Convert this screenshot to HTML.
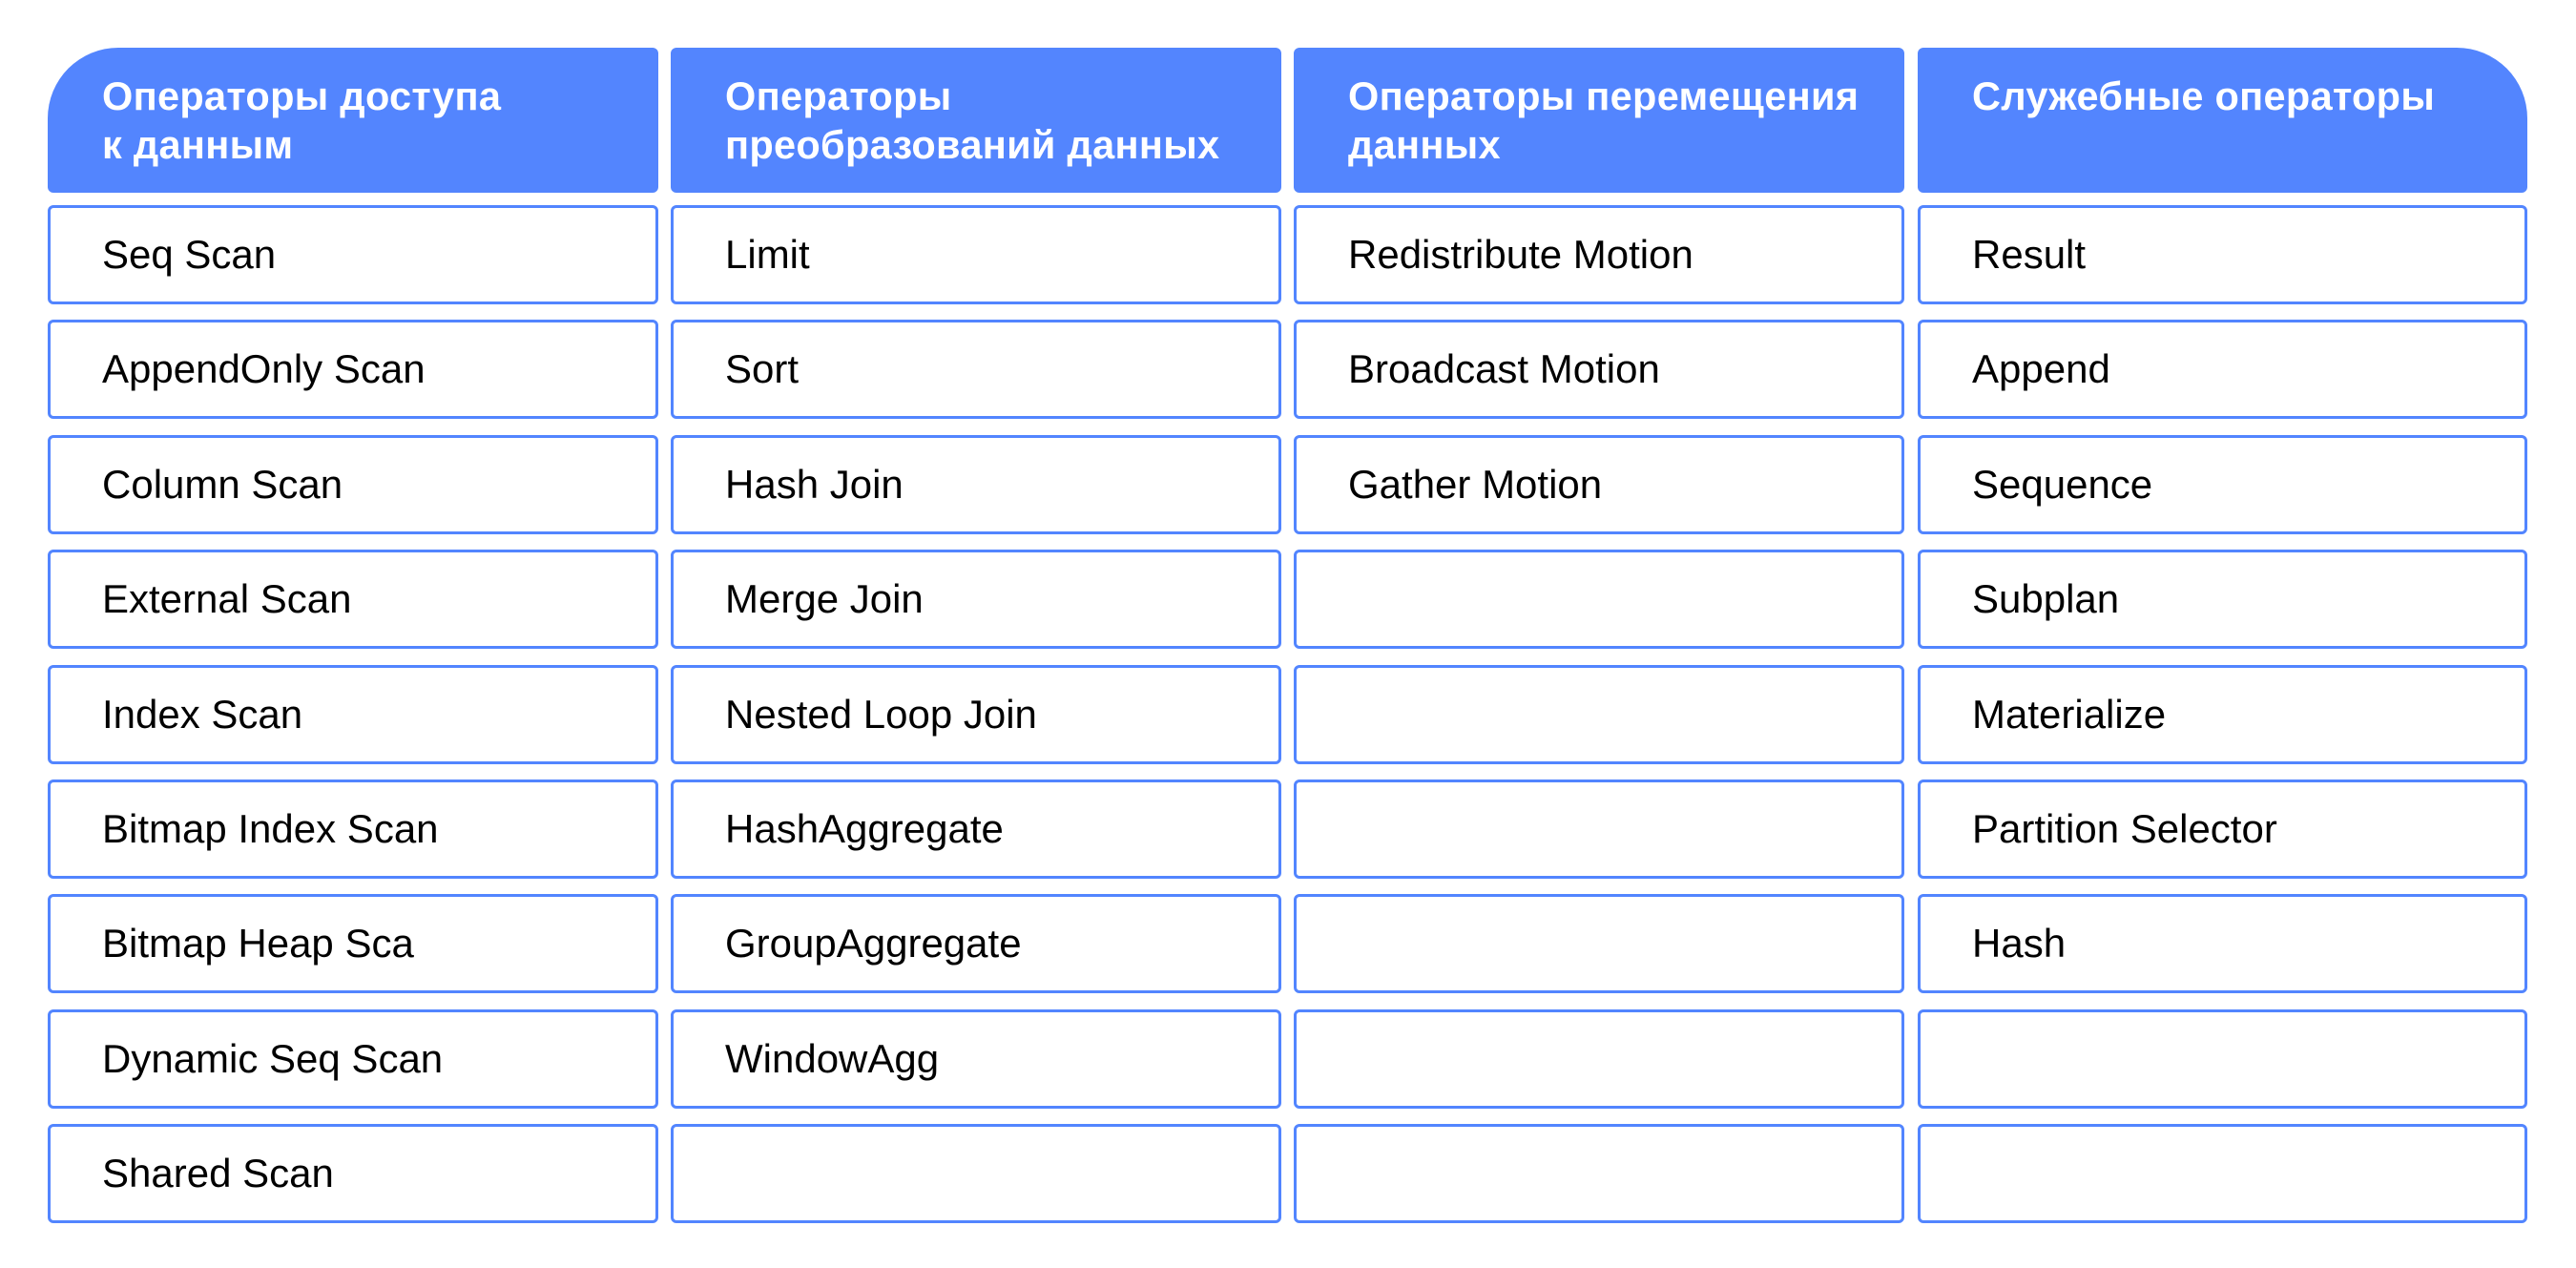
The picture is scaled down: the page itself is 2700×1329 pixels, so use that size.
<!DOCTYPE html>
<html><head><meta charset="utf-8"><style>
body{margin:0;width:2700px;height:1329px;background:#fff;position:relative;font-family:"Liberation Sans",sans-serif;overflow:hidden}
.h{position:absolute;top:50px;height:152px;background:#5385fe;border-radius:6px;color:#fff;font-weight:bold;font-size:41.5px;line-height:51px;box-sizing:border-box;padding:25px 0 0 57px;letter-spacing:0.3px}
.c{position:absolute;height:104px;border:3px solid #5285ff;border-radius:6px;box-sizing:border-box;font-size:42px;line-height:98px;padding-left:54px;color:#000}
</style></head><body>
<div class="h" style="left:50px;width:640px;border-top-left-radius:74px">Операторы доступа<br>к данным</div>
<div class="h" style="left:703px;width:640px">Операторы<br>преобразований данных</div>
<div class="h" style="left:1356px;width:640px">Операторы перемещения<br>данных</div>
<div class="h" style="left:2010px;width:639px;border-top-right-radius:74px">Служебные операторы</div>
<script>
const cols=[50,703,1356,2010];
const data=[
["Seq Scan","AppendOnly Scan","Column Scan","External Scan","Index Scan","Bitmap Index Scan","Bitmap Heap Sca","Dynamic Seq Scan","Shared Scan"],
["Limit","Sort","Hash Join","Merge Join","Nested Loop Join","HashAggregate","GroupAggregate","WindowAgg",""],
["Redistribute Motion","Broadcast Motion","Gather Motion","","","","","",""],
["Result","Append","Sequence","Subplan","Materialize","Partition Selector","Hash","",""]];
let h="";
for(let c=0;c<4;c++)for(let r=0;r<9;r++){
h+=`<div class="c" style="left:${cols[c]}px;top:${Math.round(215+r*120.4)}px;width:${c==3?639:640}px">${data[c][r]}</div>`;}
document.write(h);
</script>
</body></html>
